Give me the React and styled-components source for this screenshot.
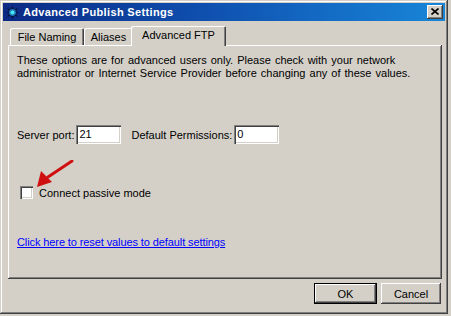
import styled, { createGlobalStyle } from "styled-components";

const GlobalStyle = createGlobalStyle`
    html, body {
        margin: 0;
        padding: 0;
        background: #D4D0C8;
    }
    body {
        font-family: 'Liberation Sans', Arial, sans-serif;
        font-size: 11px;
        color: #000000;
    }
`;

function App() {
    return (
        <>
            <GlobalStyle />
            <Window>
                <TitleBar>
                    <TitleIcon width="13" height="13" viewBox="0 0 12 12">
                        <path d="M6 0 L7.5 3 L11 2 L9 5 L12 6 L9 7 L11 10 L7.5 9 L6 12 L4.5 9 L1 10 L3 7 L0 6 L3 5 L1 2 L4.5 3 Z" fill="#06123c" />
                        <circle cx="6" cy="6" r="3.2" fill="#1a7ab8" />
                        <circle cx="6" cy="6" r="1.8" fill="#48e8f8" />
                    </TitleIcon>
                    <TitleText>Advanced Publish Settings</TitleText>
                    <CloseButton>
                        <svg width="8" height="7" viewBox="0 0 8 7">
                            <path d="M0.5 0.5 L7.5 6.5 M7.5 0.5 L0.5 6.5" stroke="#000" strokeWidth="1.6" />
                        </svg>
                    </CloseButton>
                </TitleBar>
                <Body>
                    <Tabs>
                        <Tab $w={74}>File Naming</Tab>
                        <Tab $w={49}>Aliases</Tab>
                        <Tab $w={95} $active>Advanced FTP</Tab>
                    </Tabs>
                    <Panel>
                        <Intro>
                            These options are for advanced users only. Please check with your network
                            <br />
                            administrator or Internet Service Provider before changing any of these values.
                        </Intro>
                        <FieldRow>
                            <Label>Server port:</Label>
                            <TextBox>21</TextBox>
                            <Label $gap>Default Permissions:</Label>
                            <TextBox>0</TextBox>
                        </FieldRow>
                        <CheckRow>
                            <CheckBox />
                            <span>Connect passive mode</span>
                        </CheckRow>
                        <ResetLink href="#">Click here to reset values to default settings</ResetLink>
                        <Arrow width="40" height="30" viewBox="0 0 40 30">
                            <path d="M37 1 L13 17" stroke="#d01010" strokeWidth="3" strokeLinecap="round" />
                            <path d="M2 27 L6 11 L17 22 Z" fill="#d01010" />
                        </Arrow>
                    </Panel>
                    <Footer>
                        <Button $default>OK</Button>
                        <Button>Cancel</Button>
                    </Footer>
                </Body>
            </Window>
        </>
    );
}

export default App

const Window = styled.div`
    width: 448px;
    height: 314px;
    box-sizing: border-box;
    padding: 3px;
    background: #D4D0C8;
    box-shadow: inset -1px -1px 0 #404040, inset 1px 1px 0 #D4D0C8,
        inset -2px -2px 0 #808080, inset 2px 2px 0 #FFFFFF;
    display: flex;
    flex-direction: column;
`;

const TitleBar = styled.div`
    height: 18px;
    background: linear-gradient(90deg, #0b2a84 0%, #0f4fae 45%, #1886d8 100%);
    display: flex;
    align-items: center;
    padding: 0 2px 0 3px;
`;

const TitleIcon = styled.svg`
    margin-right: 4px;
    flex-shrink: 0;
`;

const TitleText = styled.span`
    flex: 1;
    color: #FFFFFF;
    font-weight: bold;
    font-size: 11px;
    letter-spacing: 0.35px;
`;

const CloseButton = styled.div`
    width: 16px;
    height: 14px;
    box-sizing: border-box;
    background: #D4D0C8;
    box-shadow: inset -1px -1px 0 #404040, inset 1px 1px 0 #FFFFFF,
        inset -2px -2px 0 #808080;
    display: flex;
    align-items: center;
    justify-content: center;
    padding-bottom: 1px;
`;

const Body = styled.div`
    flex: 1;
    display: flex;
    flex-direction: column;
    padding: 5px 3px 0 5px;
`;

const Tabs = styled.div`
    display: flex;
    align-items: flex-end;
    height: 19px;
    padding-left: 2px;
    position: relative;
    z-index: 1;
`;

const Tab = styled.div`
    width: ${p => p.$w}px;
    height: ${p => (p.$active ? "20px" : "17px")};
    box-sizing: border-box;
    padding: 2px 0 0;
    text-align: center;
    margin: ${p => (p.$active ? "0 -2px -1px -2px" : "0")};
    background: #D4D0C8;
    border-top-left-radius: 2px;
    border-top-right-radius: 2px;
    box-shadow: inset 1px 1px 0 #FFFFFF, inset -1px 0 0 #404040, inset -2px 0 0 #808080;
    white-space: nowrap;
    line-height: 14px;
`;

const Panel = styled.div`
    position: relative;
    width: 434px;
    height: 234px;
    box-sizing: border-box;
    padding: 9px 9px 0 9px;
    box-shadow: inset -1px -1px 0 #404040, inset 1px 1px 0 #FFFFFF,
        inset -2px -2px 0 #808080;
    display: flex;
    flex-direction: column;
`;

const Intro = styled.p`
    margin: 0;
    line-height: 13px;
    word-spacing: 1px;
`;

const FieldRow = styled.div`
    display: flex;
    align-items: center;
    margin-top: 45px;
`;

const Label = styled.span`
    margin-left: ${p => (p.$gap ? "10px" : "0")};
    margin-right: 2px;
`;

const TextBox = styled.div`
    width: 45px;
    height: 19px;
    box-sizing: border-box;
    background: #FFFFFF;
    padding: 3px 3px 0;
    line-height: 13px;
    box-shadow: inset 1px 1px 0 #808080, inset 2px 2px 0 #404040,
        inset -1px -1px 0 #FFFFFF, inset -2px -2px 0 #D4D0C8;
`;

const CheckRow = styled.div`
    display: flex;
    align-items: center;
    gap: 6px;
    margin-top: 42px;
    margin-left: 3px;
`;

const CheckBox = styled.div`
    width: 13px;
    height: 13px;
    box-sizing: border-box;
    background: #FFFFFF;
    box-shadow: inset 1px 1px 0 #808080, inset 2px 2px 0 #404040,
        inset -1px -1px 0 #FFFFFF, inset -2px -2px 0 #D4D0C8;
`;

const ResetLink = styled.a`
    margin-top: 37px;
    color: #0000FF;
    text-decoration: underline;
    align-self: flex-start;
    letter-spacing: -0.1px;
`;

const Arrow = styled.svg`
    position: absolute;
    left: 27px;
    top: 115px;
`;

const Footer = styled.div`
    display: flex;
    justify-content: flex-end;
    gap: 4px;
    margin-top: 4px;
    padding-right: 1px;
`;

const Button = styled.div`
    width: ${p => (p.$default ? "63px" : "60px")};
    height: 21px;
    box-sizing: border-box;
    background: #D4D0C8;
    display: flex;
    align-items: center;
    justify-content: center;
    box-shadow: ${p => (p.$default
        ? "inset 0 0 0 1px #000000, inset -2px -2px 0 #404040, inset 2px 2px 0 #FFFFFF, inset -3px -3px 0 #808080"
        : "inset -1px -1px 0 #404040, inset 1px 1px 0 #FFFFFF, inset -2px -2px 0 #808080")};
`;
